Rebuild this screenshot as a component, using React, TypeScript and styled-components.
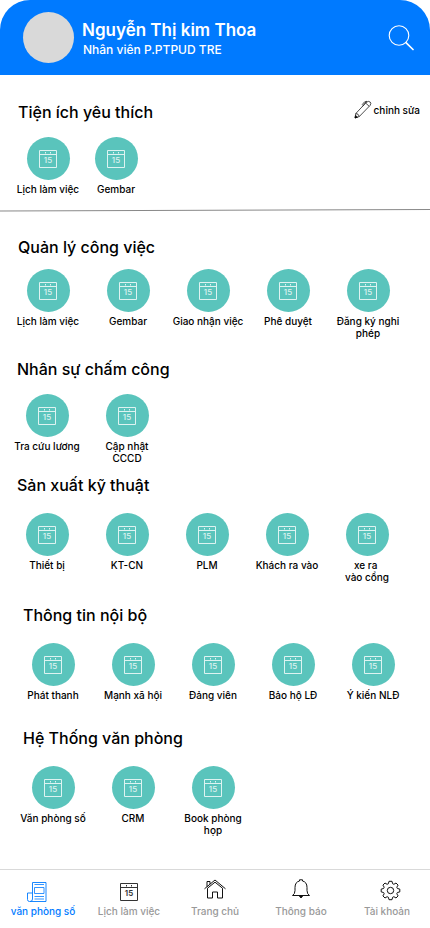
import React from 'react';
import styled, { createGlobalStyle, css } from 'styled-components';

const GlobalStyle = createGlobalStyle`
  *, *::before, *::after { box-sizing: border-box; }
  body {
    margin: 0;
    background: #ffffff;
    color: #000000;
    font-family: Inter, "Liberation Sans", sans-serif;
  }
  button { font: inherit; color: inherit; background: none; border: 0; padding: 0; cursor: pointer; }
  a { color: inherit; text-decoration: none; }
  svg { display: block; flex: none; }
`;

const Page = styled.div`
  min-height: 100vh;
  display: flex;
  flex-direction: column;
`;

const Header = styled.header`
  display: flex;
  align-items: center;
  height: 75px;
  padding: 0 16px 0 23px;
  background: #007aff;
  color: #ffffff;
  border-radius: 30px 30px 0 0;
`;

const Avatar = styled.div`
  flex: none;
  width: 51px;
  height: 51px;
  border-radius: 50%;
  background: #d9d9d9;
`;

const Profile = styled.div`
  flex: 1;
  min-width: 0;
  padding: 2px 0 0 8px;
`;

const Name = styled.h1`
  margin: 0;
  font-size: 17px;
  line-height: 22px;
  font-weight: 600;
`;

const Role = styled.p`
  margin: 0;
  padding-left: 1px;
  font-size: 12px;
  line-height: 18px;
  font-weight: 500;
`;

const Main = styled.main`
  flex: 1;
`;

const Section = styled.section<{ $top: number; $indent: number }>`
  padding-top: ${(p) => p.$top}px;
  padding-left: ${(p) => p.$indent}px;
`;

const SectionHead = styled.div`
  display: flex;
  justify-content: space-between;
  padding: 0 10px;
`;

const SectionTitle = styled.h2`
  margin: 0;
  font-size: 16px;
  line-height: 20px;
  font-weight: 500;
`;

const EditButton = styled.button`
  display: flex;
  align-items: center;
  gap: 2px;
  height: 15px;
  font-size: 10px;
  line-height: 12px;
  font-weight: 500;
`;

const Grid = styled.div<{ $gap: number; $compact?: boolean }>`
  display: grid;
  grid-template-columns: repeat(5, ${(p) => (p.$compact ? '68px' : '80px')});
  padding-top: ${(p) => p.$gap}px;
  ${(p) => p.$compact && css`padding-left: 6px;`}
`;

const Tile = styled.button`
  display: flex;
  flex-direction: column;
  align-items: center;
  gap: 3px;
`;

const Disc = styled.span`
  display: grid;
  place-items: center;
  width: 43px;
  height: 43px;
  border-radius: 50%;
  background: #5ac4bc;
  color: #ffffff;
`;

const TileLabel = styled.span`
  font-size: 10px;
  line-height: 12px;
  font-weight: 500;
  text-align: center;
  white-space: pre;
`;

const Divider = styled.svg`
  width: 100%;
  height: 3px;
  margin-top: 14px;
`;

const TabBar = styled.nav`
  position: sticky;
  bottom: 0;
  display: grid;
  grid-template-columns: repeat(5, 1fr);
  height: 59px;
  padding-top: 9px;
  background: #ffffff;
  border-top: 1px solid #d9d9d9;
`;

const Tab = styled.a<{ $active?: boolean }>`
  display: flex;
  flex-direction: column;
  align-items: center;
  gap: 2px;
  font-size: 10px;
  line-height: 12px;
  font-weight: 500;
  color: ${(p) => (p.$active ? '#007aff' : '#999999')};
  white-space: nowrap;
`;

const CalendarShape = ({ weight }: { weight: number }) => (
  <>
    <path d="M.5.5h17v17H.5zM.5 4.500h17" fill="none" stroke="currentColor" />
    <path d="M6.500 2v1.500M11.500 2v1.500" stroke="currentColor" />
    <text x="9" y="13" textAnchor="middle" fontSize="8" fontWeight={weight} fill="currentColor">15</text>
  </>
);

const TileCalendar = () => (
  <svg width="18" height="18" viewBox="0 0 18 18" opacity="0.8" aria-hidden="true">
    <CalendarShape weight={500} />
  </svg>
);

const SearchIcon = () => (
  <svg width="26" height="26" viewBox="0 0 26 26" fill="none" stroke="#fff" aria-hidden="true">
    <circle cx="11" cy="10.500" r="9.800" strokeWidth="1.100" />
    <path d="M18 17.600 25 24.500" strokeWidth="1.700" strokeLinecap="round" />
  </svg>
);

const PenIcon = () => (
  <svg width="18" height="19" viewBox="0 0 18 19" fill="none" stroke="#000" strokeWidth=".7" strokeLinejoin="round" aria-hidden="true">
    <path d="M1 18 1.800 13.500 12.300 2.300Q14.500.6 16.200 2 17.600 3.500 16 5.500L5.300 16.500Z" />
    <path d="M1.800 13.500Q4.500 13.500 5.300 16.500M11.600 3 15.200 6.300M8.500 6.400 12.700 1.300Q10.800.7 8 4.800" />
    <path d="m1 18 .6-2.500 1.900 1.700Z" fill="#000" />
  </svg>
);

const TabIcon = ({ children }: { children: React.ReactNode }) => (
  <svg width="32" height="24" viewBox="0 0 32 24" fill="none" aria-hidden="true">{children}</svg>
);

const NewsIcon = () => (
  <TabIcon>
    <path d="M5.500 20V3.500h13.500v19H2.500q-2 0-2-2v-6.500h5M5.500 20q0 2.500-2.500 2.500" stroke="#007aff" strokeWidth=".9" />
    <path d="M7.500 5.500h9.500M7.500 8.500h9.500v6H7.500zM7.500 17.500h9.500M7.500 20h9.500" stroke="#007aff" strokeWidth=".8" />
  </TabIcon>
);

const CalendarTabIcon = () => (
  <TabIcon>
    <g transform="translate(7 4)" color="#333"><CalendarShape weight={600} /></g>
  </TabIcon>
);

const HomeIcon = () => (
  <TabIcon>
    <path d="M5.500 9.800 16 1l10.500 8.800M8.500 9.200V19h5v-6h5v6h5V9.200L16 3.200Z" stroke="#111" />
    <path d="M8 7.700V2.500h3v2.700" stroke="#111" />
  </TabIcon>
);

const BellIcon = () => (
  <TabIcon>
    <path d="M7.500 16.500h17q-2.500-1.500-2.500-5V8.500Q22 3 17.500 2V.8h-3V2Q10 3 10 8.500v3q0 3.500-2.500 5Z" stroke="#111" strokeLinejoin="round" />
    <path d="M14.500 17.500q1.500 2.500 3 0Z" fill="#111" stroke="#111" />
  </TabIcon>
);

const GearIcon = () => (
  <TabIcon>
    <g transform="translate(19.500 11.500)" stroke="#111" strokeLinejoin="round">
      <circle r="3.200" />
      <path d="M-1.500-9.200h3l.6 2.400 1.300.6 2.100-1.300 2.100 2.100-1.300 2.100.6 1.300 2.400.6v2.800l-2.400.6-.6 1.300 1.300 2.100-2.100 2.100-2.100-1.300-1.300.6-.6 2.400h-3l-.6-2.400-1.300-.6-2.100 1.300-2.100-2.100 1.300-2.100-.6-1.300-2.400-.6v-2.800l2.400-.6.6-1.300-1.300-2.100 2.100-2.100 2.100 1.300 1.300-.6Z" />
    </g>
  </TabIcon>
);

type Group = { title: string; top: number; indent: number; gap: number; items: string[] };

const groups: Group[] = [
  { title: 'Quản lý công việc', top: 25, indent: 8, gap: 12, items: ['Lịch làm việc', 'Gembar', 'Giao nhận việc', 'Phê duyệt', 'Đăng ký nghỉ\nphép'] },
  { title: 'Nhân sự chấm công', top: 20, indent: 7, gap: 15, items: ['Tra cứu lương', 'Cập nhật\nCCCD'] },
  { title: 'Sản xuất kỹ thuật', top: 11, indent: 7, gap: 18, items: ['Thiết bị', 'KT-CN', 'PLM', 'Khách ra vào', 'xe ra \nvào cổng'] },
  { title: 'Thông tin nội bộ', top: 22, indent: 13, gap: 18, items: ['Phát thanh', 'Mạnh xã hội', 'Đảng viên', 'Bảo hộ LĐ', 'Ý kiến NLĐ'] },
  { title: 'Hệ Thống văn phòng', top: 27, indent: 13, gap: 18, items: ['Văn phòng số', 'CRM', 'Book phòng\nhọp'] },
];

const tabs = [
  { label: 'văn phòng số', Icon: NewsIcon, active: true },
  { label: 'Lịch làm việc', Icon: CalendarTabIcon },
  { label: 'Trang chủ', Icon: HomeIcon },
  { label: 'Thông báo', Icon: BellIcon },
  { label: 'Tài khoản', Icon: GearIcon },
];

const Tiles = ({ items, gap, compact }: { items: string[]; gap: number; compact?: boolean }) => (
  <Grid $gap={gap} $compact={compact}>
    {items.map((label) => (
      <Tile key={label} type="button">
        <Disc><TileCalendar /></Disc>
        <TileLabel>{label}</TileLabel>
      </Tile>
    ))}
  </Grid>
);

export default function App() {
  return (
    <Page>
      <GlobalStyle />
      <Header>
        <Avatar />
        <Profile>
          <Name>Nguyễn Thị kim Thoa</Name>
          <Role>Nhân viên P.PTPUD TRE</Role>
        </Profile>
        <button type="button" aria-label="Tìm kiếm"><SearchIcon /></button>
      </Header>
      <Main>
        <Section $top={27} $indent={8}>
          <SectionHead>
            <SectionTitle>Tiện ích yêu thích</SectionTitle>
            <EditButton type="button"><PenIcon />chỉnh sửa</EditButton>
          </SectionHead>
          <Tiles items={['Lịch làm việc', 'Gembar']} gap={15} compact />
        </Section>
        <Divider viewBox="0 0 430 3" preserveAspectRatio="none" aria-hidden="true">
          <path d="M0 2 430 .5" stroke="#888" strokeWidth="1" />
        </Divider>
        {groups.map((g) => (
          <Section key={g.title} $top={g.top} $indent={g.indent}>
            <SectionHead><SectionTitle>{g.title}</SectionTitle></SectionHead>
            <Tiles items={g.items} gap={g.gap} />
          </Section>
        ))}
      </Main>
      <TabBar>
        {tabs.map(({ label, Icon, active }) => (
          <Tab key={label} href="#" $active={active} aria-current={active ? 'page' : undefined}>
            <Icon />
            {label}
          </Tab>
        ))}
      </TabBar>
    </Page>
  );
}
